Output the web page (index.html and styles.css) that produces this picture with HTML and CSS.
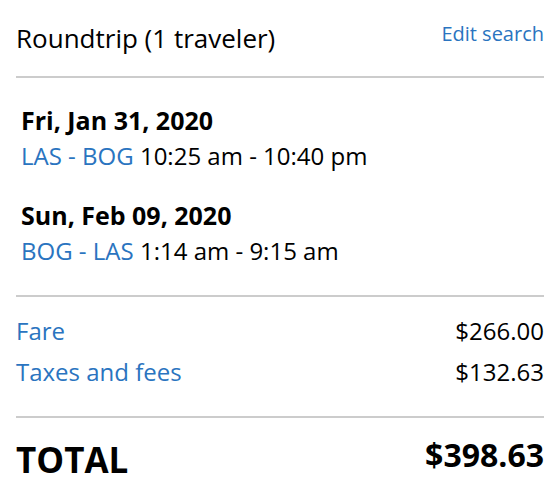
FILE: index.html
```html
<!DOCTYPE html>
<html>
<head>
<meta charset="utf-8">
<link rel="stylesheet" href="styles.css">
</head>
<body>
<div class="summary">
  <div class="header">
    <div class="title">Roundtrip (1 traveler)</div>
    <a class="edit" href="#">Edit search</a>
  </div>
  <div class="trips">
    <div class="trip">
      <div class="date">Fri, Jan 31, 2020</div>
      <div class="leg"><span class="route">LAS - BOG</span> 10:25 am - 10:40 pm</div>
    </div>
    <div class="trip">
      <div class="date">Sun, Feb 09, 2020</div>
      <div class="leg"><span class="route">BOG - LAS</span> 1:14 am - 9:15 am</div>
    </div>
  </div>
  <div class="prices">
    <div class="row"><a class="label" href="#">Fare</a><span class="amount">$266.00</span></div>
    <div class="row"><a class="label" href="#">Taxes and fees</a><span class="amount">$132.63</span></div>
  </div>
  <div class="total">
    <span class="total-label">TOTAL</span><span class="total-amount">$398.63</span>
  </div>
</div>
</body>
</html>
```
FILE: styles.css
```css
html, body {
  margin: 0;
  padding: 0;
  background: #fff;
}
body {
  font-family: "Open Sans", "Liberation Sans", sans-serif;
  color: #000;
}
.summary {
  padding: 0 16px;
}
.header {
  display: flex;
  justify-content: space-between;
  align-items: flex-start;
  padding: 20px 0;
  border-bottom: 2px solid #cccccc;
}
.title {
  font-size: 26px;
  line-height: 36px;
}
.edit {
  font-size: 20px;
  line-height: 28px;
  color: #2a74c0;
  text-decoration: none;
}
.trips {
  padding: 25px 5px 25px;
  border-bottom: 2px solid #cccccc;
  display: flex;
  flex-direction: column;
  gap: 23px;
}
.date {
  font-size: 25px;
  font-weight: 700;
  line-height: 34px;
}
.leg {
  font-size: 24px;
  line-height: 38px;
}
.route {
  color: #2a74c0;
}
.prices {
  padding: 13px 0 24px;
  border-bottom: 2px solid #cccccc;
}
.row {
  display: flex;
  justify-content: space-between;
  font-size: 24px;
  line-height: 41px;
}
.label {
  color: #2a74c0;
  text-decoration: none;
}
.total {
  display: flex;
  justify-content: space-between;
  align-items: flex-start;
  font-weight: 700;
  padding-top: 18px;
}
.total-label {
  font-size: 35px;
  line-height: 48px;
}
.total-amount {
  font-size: 32px;
  line-height: 38px;
}
```
